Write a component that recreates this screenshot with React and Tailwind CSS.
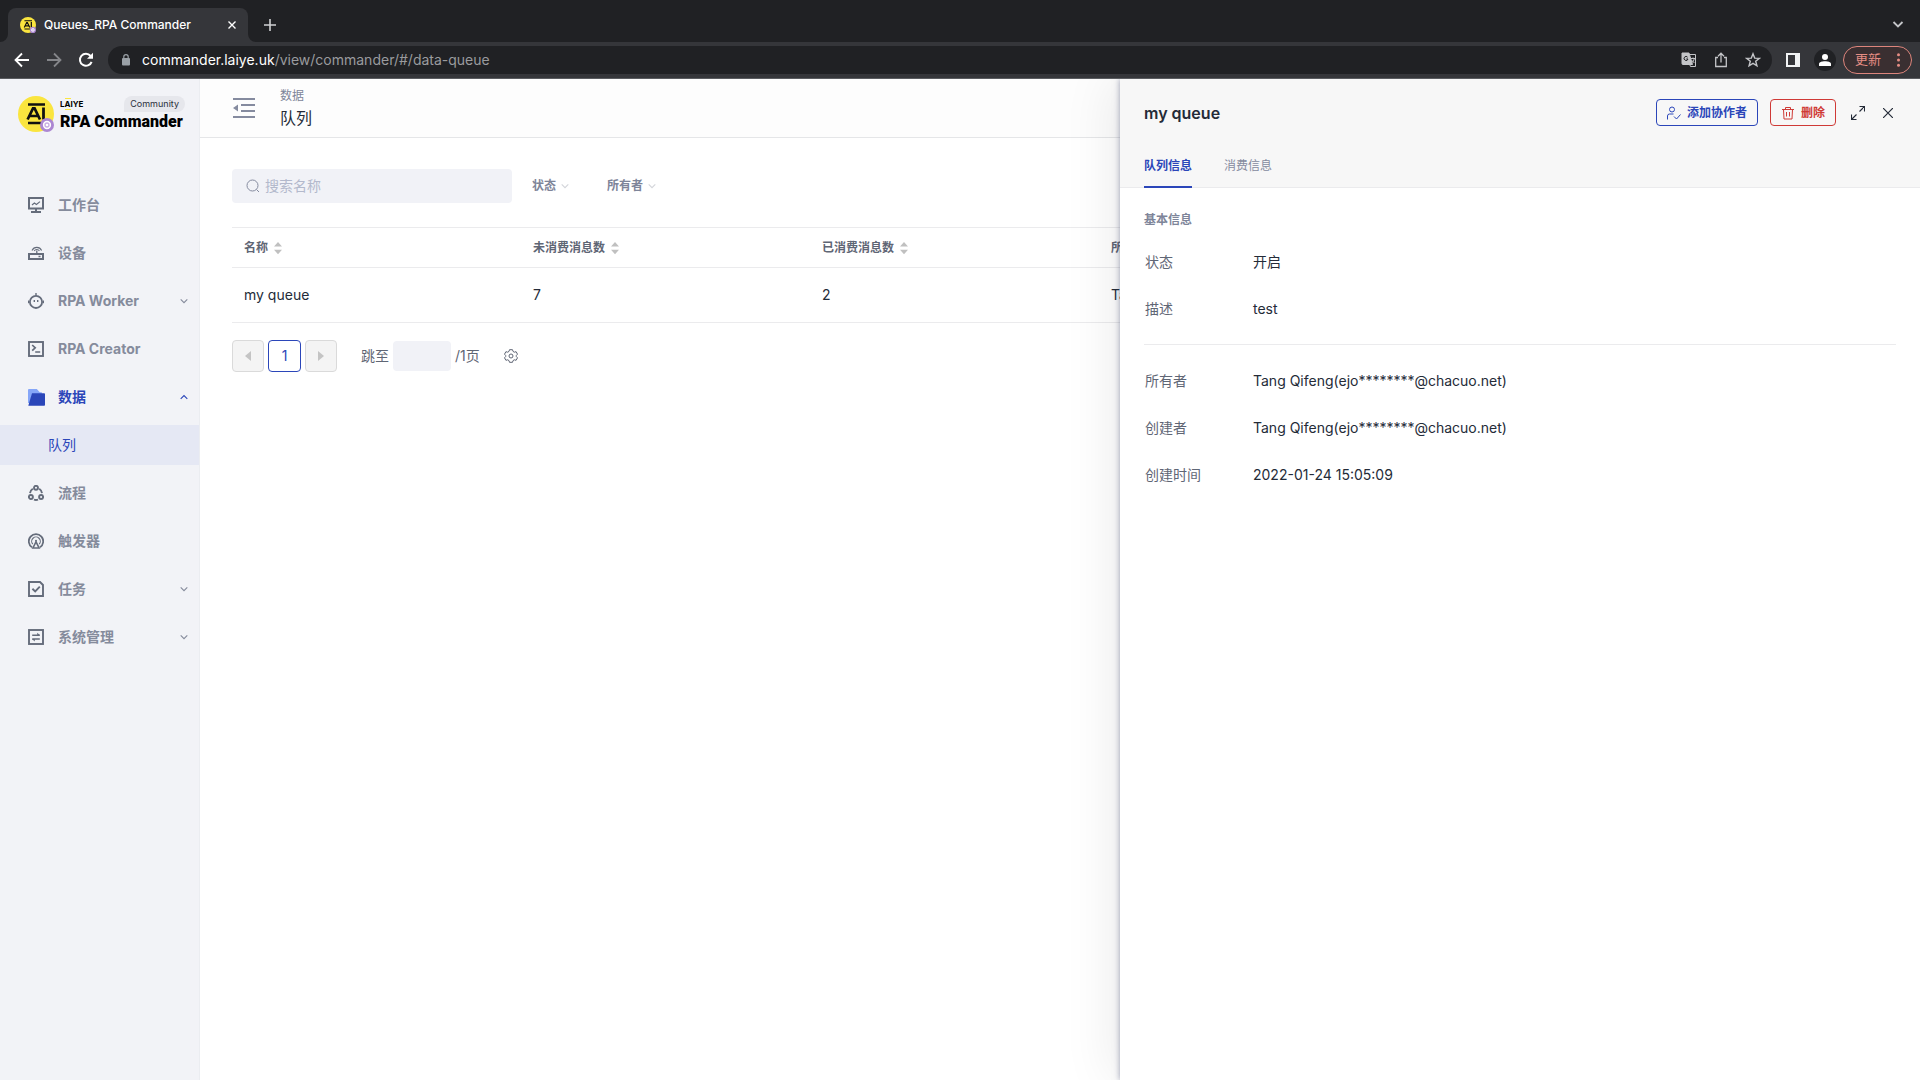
import React, { useState } from 'react';

const FONT = "font-['Inter','Noto_Sans_CJK_SC',sans-serif]";

/* ---------- icons ---------- */

const Svg = ({ size = 16, box = 16, className = '', sw = 1.5, children }) => (
  <svg
    width={size}
    height={size}
    viewBox={`0 0 ${box} ${box}`}
    fill="none"
    stroke="currentColor"
    strokeWidth={sw}
    className={`shrink-0 ${className}`}
    aria-hidden="true"
  >
    {children}
  </svg>
);

const Logo = ({ size }) => (
  <svg width={size} height={size} viewBox="0 0 36 36" className="shrink-0" aria-hidden="true">
    <circle cx="18" cy="18" r="18" fill="#fae53f" />
    <path d="M10 8.5h17M10 27h13" stroke="#111" strokeWidth="2.4" />
    <path d="M9.6 23.5 15 12.4h1.6l5.4 11.1M11.8 20h8" fill="none" stroke="#111" strokeWidth="2.7" />
    <path d="M25.5 11.5v12" stroke="#111" strokeWidth="2.8" />
    <circle cx="29" cy="29" r="7" fill="#ac87d2" />
    <circle cx="29" cy="29" r="3.4" fill="#c9aee4" stroke="#fff" strokeWidth="1.5" />
    <circle cx="29" cy="29" r="1.3" fill="#fff" />
  </svg>
);

const WorkbenchIcon = () => (
  <Svg sw={2}>
    <path d="M1 1h14v10.500H1zM8 11.500V15M3 15h10" />
    <path d="m4 8 2.400-2 2 1.400L12 4.600" strokeWidth="1.200" />
  </Svg>
);

const DeviceIcon = () => (
  <Svg sw={2}>
    <rect x="1" y="9" width="14" height="5" />
    <path d="M10.500 11.500h2M8.800 8.500V5.600" strokeWidth="1.300" />
    <path d="M4 5.400a5.300 5.300 0 0 1 9.600 0M6.200 6a3 3 0 0 1 5.200 0" strokeWidth="1.100" />
  </Svg>
);

const WorkerIcon = () => (
  <Svg sw={1.800}>
    <circle cx="8" cy="8.900" r="6.100" />
    <path d="M8 0v2.800M.4 7.600v2.600M15.600 7.600v2.600M6.300 7v2M9.700 7v2" strokeWidth="1.400" />
  </Svg>
);

const CreatorIcon = () => (
  <Svg sw={1.900}>
    <rect x="1" y="1" width="14" height="14" />
    <path d="m4.200 4 3 2.800-3 2.800M7.200 11h5" strokeWidth="1.700" />
  </Svg>
);

const DataIcon = () => (
  <svg width="17" height="17" viewBox="0 0 17 17" className="shrink-0" aria-hidden="true">
    <path d="M0 1.2C0 .5.5 0 1.200 0h7.600l3 3.200h2V14H0z" fill="#86a6f8" />
    <path d="M4 4.200h12.200c.5 0 .8.3.8.8v10.800c0 .5-.3.900-.8.900H.3z" fill="#2b46b9" />
  </svg>
);

const ProcessIcon = () => (
  <Svg sw={1.900}>
    <circle cx="8" cy="2.800" r="2" />
    <circle cx="2.900" cy="12" r="2" />
    <circle cx="13.100" cy="12" r="2" />
    <path d="M4.800 3.800A6.500 6.500 0 0 0 2 8.200M11.200 3.800A6.500 6.500 0 0 1 14 8.200M6 14.600q2 .8 4 0" />
  </Svg>
);

const TriggerIcon = () => (
  <Svg sw={1.800}>
    <path d="M4 14.300a7.200 7.200 0 1 1 8 0" />
    <path d="M4.800 11.200a4.300 4.300 0 1 1 6.400 0" strokeWidth="1.100" />
    <path d="M8 8.800 4.900 15h6.200z" strokeWidth="1.600" />
    <circle cx="8" cy="7.800" r="1" fill="currentColor" stroke="none" />
  </Svg>
);

const TaskIcon = () => (
  <Svg sw={1.900}>
    <path d="M1 1h11l3 3v11H1z" />
    <path d="m4.400 7.800 2.800 2.700 4.600-4.800" />
  </Svg>
);

const SystemIcon = () => (
  <Svg sw={1.900}>
    <rect x="1" y="1" width="14" height="14" />
    <path d="M4.200 6.300h7.600M4.200 9.900h7.600" strokeWidth="1.500" />
    <path d="M9.200 3.800v2.500h2.900zM6.800 12.400V9.900H3.900z" fill="currentColor" stroke="none" />
  </Svg>
);

const Chevron = ({ up, size = 8, className }) => (
  <Svg size={size} box={8} sw={1.1} className={className}>
    <path d={up ? 'M.7 5.800 4 2.500l3.300 3.300' : 'M.7 2.300 4 5.600l3.300-3.300'} />
  </Svg>
);

const SortIcon = () => (
  <svg width="8" height="14" viewBox="0 0 8 14" fill="#c0c0c0" className="shrink-0" aria-hidden="true">
    <path d="M0 5.500 4 1l4 4.500zM0 8.800h8L4 13.300z" />
  </svg>
);

/* ---------- data ---------- */

const MENU = [
  { label: '工作台', icon: WorkbenchIcon },
  { label: '设备', icon: DeviceIcon },
  { label: 'RPA Worker', icon: WorkerIcon, expandable: true },
  { label: 'RPA Creator', icon: CreatorIcon },
  { label: '数据', icon: DataIcon, expandable: true, open: true, children: ['队列'] },
  { label: '流程', icon: ProcessIcon },
  { label: '触发器', icon: TriggerIcon },
  { label: '任务', icon: TaskIcon, expandable: true },
  { label: '系统管理', icon: SystemIcon, expandable: true },
];

const COLUMNS = [
  { title: '名称', sortable: true },
  { title: '未消费消息数', sortable: true },
  { title: '已消费消息数', sortable: true },
  { title: '所有者' },
];

const OWNER = 'Tang Qifeng(ejo********@chacuo.net)';

const BASIC = [
  ['状态', '开启'],
  ['描述', 'test'],
];

const META = [
  ['所有者', OWNER],
  ['创建者', OWNER],
  ['创建时间', '2022-01-24 15:05:09'],
];

/* ---------- browser frame ---------- */

const BrowserBar = () => (
  <div className="bg-[#202124] text-white">
    <div className="flex h-[42px] items-end justify-between px-2">
      <div className="flex items-center">
        <div className="relative flex h-[34px] w-60 items-center gap-2 rounded-t-lg bg-[#35363a] px-3">
          <Logo size={16} />
          <span className="flex-1 text-xs font-medium">Queues_RPA Commander</span>
          <button aria-label="Close tab">
            <Svg size={8} box={8} sw={1.4}>
              <path d="M.5.5l7 7M7.500.5l-7 7" />
            </Svg>
          </button>
          <svg width="8" height="8" viewBox="0 0 8 8" className="absolute bottom-0 -left-2" aria-hidden="true">
            <path d="M8 0v8H0a8 8 0 0 0 8-8" fill="#35363a" />
          </svg>
          <svg width="8" height="8" viewBox="0 0 8 8" className="absolute -right-2 bottom-0" aria-hidden="true">
            <path d="M0 0v8h8a8 8 0 0 1-8-8" fill="#35363a" />
          </svg>
        </div>
        <button aria-label="New tab" className="ml-4 text-[#d0d1d3]">
          <Svg size={12} box={12} sw={1.6}>
            <path d="M6 0v12M0 6h12" />
          </Svg>
        </button>
      </div>
      <button aria-label="Search tabs" className="mr-2 mb-3 text-[#c4c5c8]">
        <Svg size={12} box={12} sw={1.8}>
          <path d="m1.500 4 4.500 4.500L10.500 4" />
        </Svg>
      </button>
    </div>

    <div className="flex h-[37px] items-center border-b border-[#5a5c60] bg-[#35363a] pr-2 pl-[14px]">
      <div className="flex items-center gap-4">
        <button aria-label="Back">
          <Svg sw={1.8}>
            <path d="M15 8H2M8 1.500 1.500 8 8 14.500" />
          </Svg>
        </button>
        <button aria-label="Forward" className="text-[#85868a]">
          <Svg sw={1.8}>
            <path d="M1 8h13M8 1.500 14.500 8 8 14.500" />
          </Svg>
        </button>
        <button aria-label="Reload">
          <Svg sw={2}>
            <path d="M13.600 9.800A6 6 0 1 1 12.600 4" />
            <path d="M15 .8v6H9z" fill="currentColor" stroke="none" />
          </Svg>
        </button>
      </div>

      <div className="ml-[14px] flex h-7 flex-1 items-center rounded-full bg-[#202124] pr-[11px] pl-[14px] text-sm">
        <svg width="8" height="12" viewBox="0 0 8 12" className="mr-3 shrink-0" aria-hidden="true">
          <rect y="4" width="8" height="7.500" rx="1" fill="#9aa0a6" />
          <path d="M1.800 5V2.800a2.200 2.200 0 0 1 4.400 0V5" fill="none" stroke="#9aa0a6" strokeWidth="1.200" />
        </svg>
        <label htmlFor="url">commander.laiye.uk</label>
        <input
          id="url"
          className="min-w-0 flex-1 bg-transparent text-[#9a9b9e] outline-none"
          defaultValue="/view/commander/#/data-queue"
        />
        <div className="flex items-center gap-4 text-[#c4c5c8]">
          <button aria-label="Translate">
            <Svg sw={1}>
              <path d="M1 1h7l3.500 11.500H2a1 1 0 0 1-1-1z" fill="currentColor" />
              <path d="M9 2.500h5.500v12H9.500l-1-2.500" />
              <path d="M6.600 5.200A2 2 0 1 0 7 7H5.300" stroke="#202124" />
              <path d="M10 6.500h4M12 5.500v1M10.800 8.300l2.600 2.700M13.200 6.700c-.3 2-1.200 3-2.400 4" />
            </Svg>
          </button>
          <button aria-label="Share">
            <Svg sw={1.300}>
              <path d="M5 5.500H2.700v9h10.600v-9H11M8 10.500V1.500M5 4.200l3-3 3 3" />
            </Svg>
          </button>
          <button aria-label="Bookmark">
            <Svg sw={1.400}>
              <path d="m8 1.800 1.700 4.300 4.600.3-3.600 2.900 1.200 4.500L8 11.300l-3.900 2.500 1.200-4.500L1.700 6.400l4.600-.3z" />
            </Svg>
          </button>
        </div>
      </div>

      <button aria-label="Side panel" className="ml-[14px]">
        <svg width="14" height="14" viewBox="0 0 14 14" aria-hidden="true">
          <path d="M0 0h14v14H0z" fill="#f1f3f4" />
          <path d="M2 2h7v10H2z" fill="#35363a" />
        </svg>
      </button>
      <button aria-label="Profile" className="ml-[14px] flex size-[22px] items-center justify-center rounded-full bg-[#202124]">
        <svg width="12" height="12" viewBox="0 0 12 12" fill="#fff" aria-hidden="true">
          <circle cx="6" cy="3" r="3" />
          <path d="M0 12V9.800C0 8 3 7.200 6 7.200s6 .8 6 2.600V12z" />
        </svg>
      </button>
      <button className="ml-[7px] flex h-7 items-center gap-4 rounded-full border border-[#dd857c] bg-[#3a2f31] px-[11px] text-[13px] text-[#e68d84]">
        更新
        <svg width="3" height="14" viewBox="0 0 3 14" fill="currentColor" aria-hidden="true">
          <circle cx="1.500" cy="1.800" r="1.500" />
          <circle cx="1.500" cy="7" r="1.500" />
          <circle cx="1.500" cy="12.200" r="1.500" />
        </svg>
      </button>
    </div>
  </div>
);

/* ---------- sidebar ---------- */

const Sidebar = () => (
  <aside className="w-50 shrink-0 border-r border-[#ebedf1] bg-[#f2f3f7]">
    <div className="flex items-center gap-1.5 pt-4 pl-[18px]">
      <Logo size={36} />
      <div className="flex-1 pr-[14px]">
        <div className="flex h-[17px] items-center justify-between">
          <span className="text-[8px] leading-2 font-bold text-black">
            L<span className="border-y border-[#fae53f]">A</span>IYE
          </span>
          <span className="rounded-t-lg rounded-br-lg bg-[#e6e7ec] px-1.5 text-[9px] leading-4 text-[#2b303b]">
            Community
          </span>
        </div>
        <div className="font-['Roboto',sans-serif] text-base leading-5 font-black whitespace-nowrap text-black">
          RPA Commander
        </div>
      </div>
    </div>

    <nav className="mt-[49px] text-sm">
      {MENU.map(({ label, icon: Icon, expandable, open, children }) => (
        <div key={label}>
          <a
            href="#"
            className={`flex h-12 items-center gap-[14px] pr-[11px] pl-7 font-bold ${open ? 'text-[#2b46b9]' : 'text-[#858b9c]'}`}
          >
            <span className={`flex w-4 ${open ? '' : 'text-[#656c7b]'}`}>
              <Icon />
            </span>
            <span className="flex-1">{label}</span>
            {expandable && <Chevron up={open} />}
          </a>
          {children?.map((child) => (
            <a key={child} href="#" className="my-1 flex h-10 items-center bg-[#e5e8f4] pl-12 text-[#2b46b9]">
              {child}
            </a>
          ))}
        </div>
      ))}
    </nav>
  </aside>
);

/* ---------- list page ---------- */

const Filter = ({ id, label }) => (
  <label htmlFor={id} className="flex items-center gap-1">
    <select id={id} aria-label={label} className="appearance-none bg-transparent text-xs font-bold text-[#7e8599] outline-none">
      <option>{label}</option>
    </select>
    <Chevron className="text-[#d3d5da]" />
  </label>
);

const QueueList = () => (
  <main className="min-w-0 flex-1 bg-white text-[#242b38]">
    <header className="flex h-[59px] items-center gap-6 border-b border-[#e5e6e8] bg-[#fdfdfd] pl-8">
      <button aria-label="Collapse menu" className="text-[#858b9f]">
        <svg width="24" height="20" viewBox="0 0 24 20" fill="none" stroke="currentColor" strokeWidth="1.800" aria-hidden="true">
          <path d="M1 1h22M9 7h14M9 13h14M1 19h22" />
          <path d="M6 6.500v7L1 10z" fill="currentColor" stroke="none" />
        </svg>
      </button>
      <div>
        <div className="text-xs leading-5 text-[#7e8599]">数据</div>
        <h1 className="text-base leading-6">队列</h1>
      </div>
    </header>

    <div className="px-8 pt-[31px]">
      <div className="flex items-center">
        <label className="flex h-[34px] w-[280px] items-center gap-[5px] rounded bg-[#f1f2f7] px-[14px] text-[#858b9f]">
          <Svg size={14} box={14} sw={1}>
            <circle cx="6.500" cy="6.500" r="5.500" />
            <path d="m10.500 10.500 2.500 2.500" />
          </Svg>
          <input
            aria-label="搜索名称"
            placeholder="搜索名称"
            className="min-w-0 flex-1 bg-transparent text-sm outline-none placeholder:text-[#b3b9cc]"
          />
        </label>
        <div className="ml-5 flex gap-[38px]">
          <Filter id="status" label="状态" />
          <Filter id="owner" label="所有者" />
        </div>
      </div>

      <table className="mt-6 w-full table-fixed border-collapse text-left">
        <colgroup>
          <col className="w-[289px]" />
          <col className="w-[289px]" />
          <col className="w-[289px]" />
          <col />
        </colgroup>
        <thead>
          <tr className="h-10 border-y border-[#ebebed] text-xs text-[#5f6675]">
            {COLUMNS.map((col) => (
              <th key={col.title} className="px-3 font-semibold">
                <span className="flex items-center gap-1.5">
                  {col.title}
                  {col.sortable && <SortIcon />}
                </span>
              </th>
            ))}
          </tr>
        </thead>
        <tbody>
          <tr className="h-[55px] border-b border-[#ebebed] text-sm">
            <td className="px-3">my queue</td>
            <td className="px-3">7</td>
            <td className="px-3">2</td>
            <td className="px-3">{OWNER}</td>
          </tr>
        </tbody>
      </table>

      <div className="mt-[17px] flex items-center text-sm text-[#5f6675]">
        <div className="flex gap-1">
          <button aria-label="上一页" disabled className="flex size-8 items-center justify-center rounded border border-[#dadada] bg-[#f4f4f4]">
            <svg width="6" height="10" viewBox="0 0 6 10" fill="#c4c4c4" aria-hidden="true">
              <path d="M6 0v10L0 5z" />
            </svg>
          </button>
          <button className="h-8 w-[33px] rounded border border-[#2b46b9] bg-white text-[#2b46b9]">1</button>
          <button aria-label="下一页" disabled className="flex size-8 items-center justify-center rounded border border-[#dadada] bg-[#f4f4f4]">
            <svg width="6" height="10" viewBox="0 0 6 10" fill="#c4c4c4" aria-hidden="true">
              <path d="M0 0v10l6-5z" />
            </svg>
          </button>
        </div>
        <label htmlFor="page" className="ml-6">跳至</label>
        <input id="page" className="mx-1 h-[30px] w-[58px] rounded bg-[#f1f2f7] px-2 outline-none" />
        <span>/1页</span>
        <button aria-label="设置" className="ml-6">
          <Svg size={14} box={14} sw={1}>
            <path d="M5.500.7h3l.5 1.700 1.300.8 1.800-.5 1.400 2.500-1.200 1.300v1l1.200 1.300-1.400 2.500-1.800-.5-1.300.8-.5 1.700h-3L5 11.600l-1.300-.8-1.800.5L.5 8.800l1.200-1.300v-1L.5 5.200l1.400-2.500 1.800.5L5 2.400z" />
            <circle cx="7" cy="7" r="2" />
          </Svg>
        </button>
      </div>
    </div>
  </main>
);

/* ---------- detail drawer ---------- */

const InfoRow = ({ label, value }) => (
  <div className="flex h-[47px] items-center pl-px text-sm">
    <dt className="w-[108px] text-[#5f6675]">{label}</dt>
    <dd>{value}</dd>
  </div>
);

const TABS = ['队列信息', '消费信息'];

const Drawer = () => {
  const [tab, setTab] = useState(TABS[0]);

  return (
    <section className="absolute inset-y-0 right-0 w-5/12 bg-white text-[#242b38] shadow-[0_0_6px_rgba(62,68,110,0.5),-8px_0_48px_rgba(0,0,0,0.08)]">
      <div className="border-b border-[#ebebed] bg-[#f7f7f7] px-6 pt-5">
        <div className="flex h-[27px] items-center">
          <h2 className="flex-1 text-base leading-6 font-semibold">my queue</h2>
          <button className="flex h-[27px] items-center gap-1.5 rounded border border-[#2b46b9] px-[10px] text-xs font-semibold text-[#2b46b9]">
            <Svg size={14} box={14} sw={1}>
              <circle cx="5" cy="3.500" r="2.500" />
              <path d="M.5 13.500V10q0-2 2-2h4M7 10.500l2.500 2.500 4-4.500" />
            </Svg>
            添加协作者
          </button>
          <button className="ml-3 flex h-[27px] items-center gap-1.5 rounded border border-[#cf3a36] px-[10px] text-xs font-semibold text-[#cf3a36]">
            <Svg size={14} box={14} sw={1}>
              <path d="M1 3.500h12M4.500 3.500v-2h5v2M2.500 3.500l.5 9.500h8l.5-9.500M5.500 6v4.500M8.500 6v4.500" />
            </Svg>
            删除
          </button>
          <button aria-label="全屏" className="ml-[15px]">
            <Svg size={14} box={14} sw={1.100}>
              <path d="M8.500.5h5v5M13.500.5l-5 5M.5 8.500v5h5M.5 13.500l5-5" />
            </Svg>
          </button>
          <button aria-label="关闭" className="mr-[3px] ml-[18px]">
            <Svg size={10} box={10} sw={1.200}>
              <path d="m0 0 10 10M10 0 0 10" />
            </Svg>
          </button>
        </div>
        <div role="tablist" className="-mb-px mt-5 flex gap-8">
          {TABS.map((name) => (
            <button
              key={name}
              role="tab"
              aria-selected={tab === name}
              onClick={() => setTab(name)}
              className={`h-[42px] border-b-2 text-xs ${
                tab === name ? 'border-[#2b46b9] font-bold text-[#2b46b9]' : 'border-transparent text-[#858b9f]'
              }`}
            >
              {name}
            </button>
          ))}
        </div>
      </div>

      <div className="px-6 pt-[22px]">
        <h3 className="text-xs leading-5 font-bold text-[#7e8599]">基本信息</h3>
        <dl className="mt-2 border-b border-[#ebebed] pb-3">
          {BASIC.map(([label, value]) => (
            <InfoRow key={label} label={label} value={value} />
          ))}
        </dl>
        <dl className="mt-3">
          {META.map(([label, value]) => (
            <InfoRow key={label} label={label} value={value} />
          ))}
        </dl>
      </div>
    </section>
  );
};

const App = () => (
  <div className={`flex min-h-screen flex-col ${FONT}`}>
    <BrowserBar />
    <div className="relative flex flex-1 overflow-hidden">
      <Sidebar />
      <QueueList />
      <Drawer />
    </div>
  </div>
);

export default App;
